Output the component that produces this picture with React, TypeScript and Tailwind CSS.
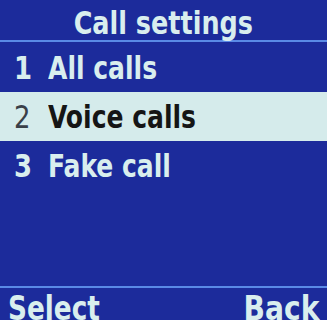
import React from "react";

const ITEMS = [
  { num: "1", label: "All calls" },
  { num: "2", label: "Voice calls" },
  { num: "3", label: "Fake call" },
];

const SELECTED = 1;

export default function App() {
  return (
    <div
      className="w-[327px] h-[320px] overflow-hidden bg-[#1c2b9b] text-[#d9eeee] flex flex-col"
      style={{ fontFamily: '"DejaVu Sans Condensed", "DejaVu Sans", sans-serif' }}
    >
      {/* title */}
      <div className="h-[40px] flex items-end justify-center pb-[1px] font-bold text-[32px] leading-none">
        <span className="inline-block scale-x-[0.885] whitespace-nowrap">Call settings</span>
      </div>
      <div className="h-[2px] bg-[#5a8ae6]" />

      {/* menu */}
      <div className="flex flex-col pt-[1px]">
        {ITEMS.map((it, i) => (
          <div
            key={it.num}
            className={
              "h-[49px] flex items-center pl-[14px] text-[32px] leading-none " +
              (i === SELECTED ? "bg-[#d5ebeb] text-[#151515]" : "")
            }
          >
            <span className={"w-[34px] " + (i === SELECTED ? "font-normal text-[#3a4048]" : "font-bold")}>
              <span className="inline-block scale-x-[0.9] origin-left">{it.num}</span>
            </span>
            <span className="inline-block font-bold scale-x-[0.87] origin-left whitespace-nowrap">{it.label}</span>
          </div>
        ))}
      </div>

      <div className="flex-1" />

      {/* softkeys */}
      <div className="h-[2px] bg-[#5a8ae6]" />
      <div className="h-[32px] flex items-start justify-between px-[8px] pt-[3px] font-bold text-[34px] leading-none">
        <span className="inline-block scale-x-[0.86] origin-left">Select</span>
        <span className="inline-block scale-x-[0.92] origin-right">Back</span>
      </div>
    </div>
  );
}
